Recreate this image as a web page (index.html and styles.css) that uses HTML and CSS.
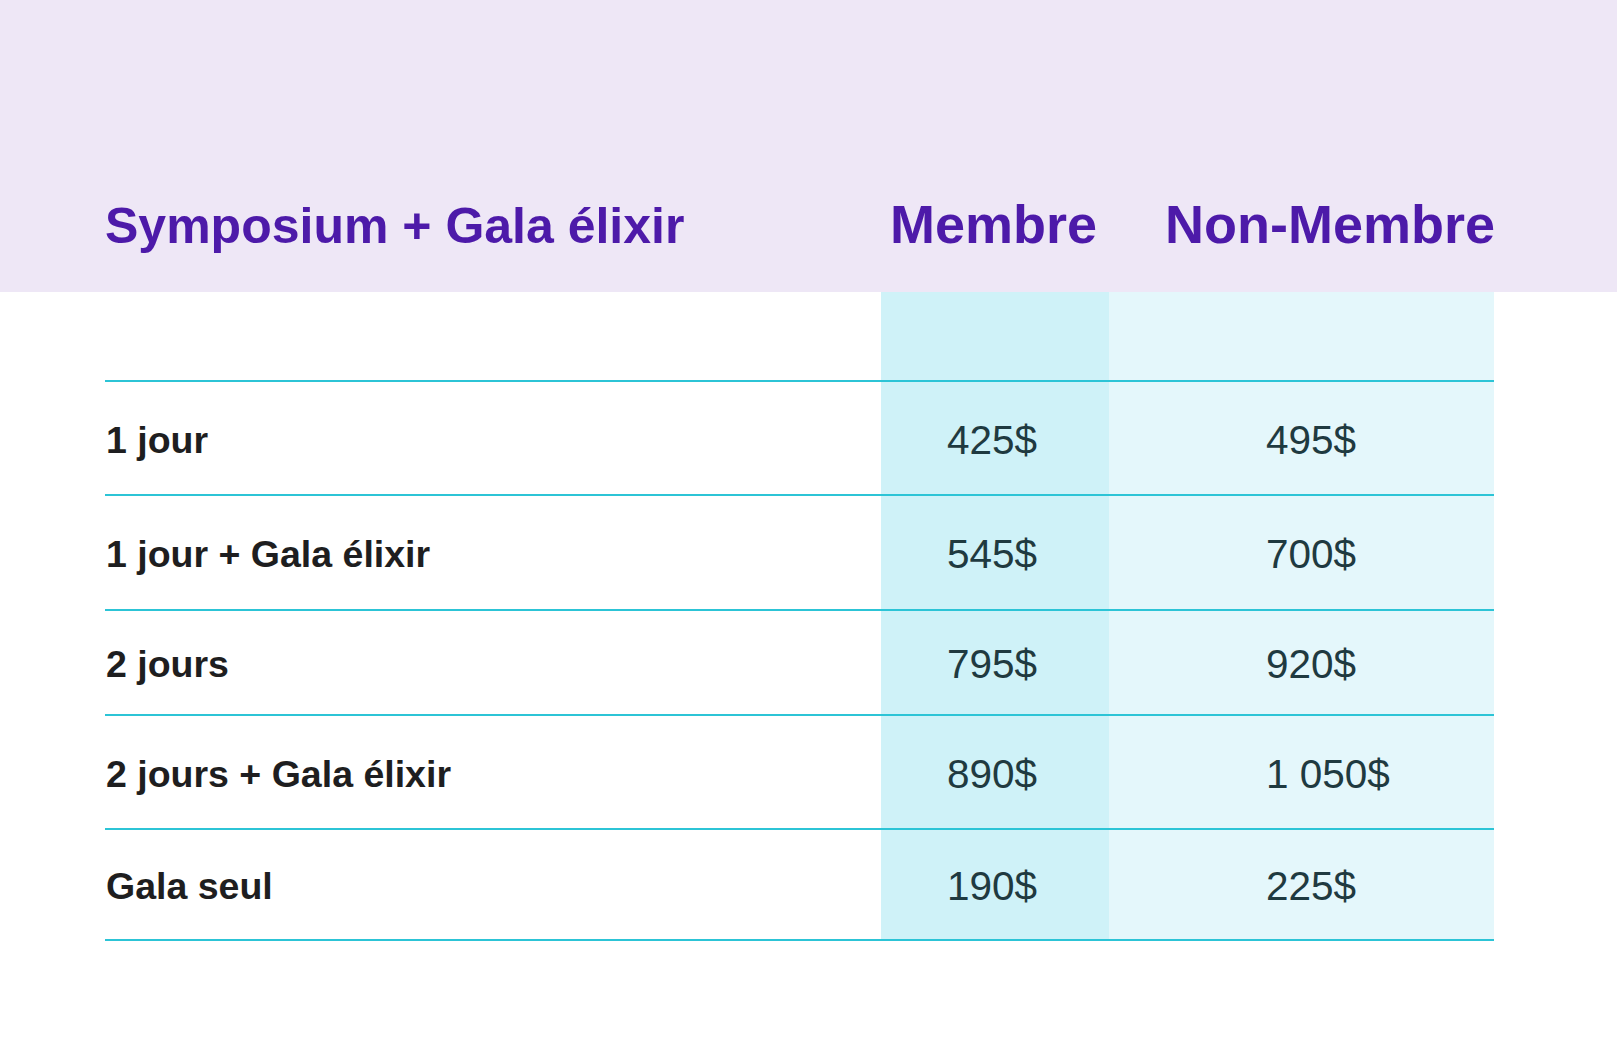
FILE: index.html
```html
<!DOCTYPE html>
<html lang="fr">
<head>
<meta charset="utf-8">
<title>Symposium + Gala élixir</title>
<link rel="stylesheet" href="styles.css">
</head>
<body>
<header class="band">
  <div class="grid head-row">
    <h1 class="title">Symposium + Gala élixir</h1>
    <div class="col-head col-member">Membre</div>
    <div class="col-head col-non">Non-Membre</div>
  </div>
</header>
<section class="grid table">
  <div class="cell label spacer"></div>
  <div class="cell member spacer"></div>
  <div class="cell non spacer"></div>

  <div class="cell label">1 jour</div>
  <div class="cell member price">425$</div>
  <div class="cell non price">495$</div>

  <div class="cell label">1 jour + Gala élixir</div>
  <div class="cell member price">545$</div>
  <div class="cell non price">700$</div>

  <div class="cell label">2 jours</div>
  <div class="cell member price">795$</div>
  <div class="cell non price">920$</div>

  <div class="cell label">2 jours + Gala élixir</div>
  <div class="cell member price">890$</div>
  <div class="cell non price">1 050$</div>

  <div class="cell label">Gala seul</div>
  <div class="cell member price">190$</div>
  <div class="cell non price">225$</div>
</section>
</body>
</html>
```
FILE: styles.css
```css
html, body {
  margin: 0;
  padding: 0;
  background: #ffffff;
  font-family: "Liberation Sans", Arial, sans-serif;
}

.grid {
  display: grid;
  grid-template-columns: 776px 228px 385px;
  margin-left: 105px;
  width: 1389px;
}

.band {
  background: #eee7f6;
  height: 292px;
  box-sizing: border-box;
  padding-top: 197px;
}

.head-row {
  align-items: baseline;
}

.title {
  margin: 0;
  font-size: 50px;
  line-height: 1;
  font-weight: 700;
  color: #4d1aa9;
  white-space: nowrap;
}

.col-head {
  font-size: 54px;
  line-height: 1;
  font-weight: 700;
  color: #4d1aa9;
  white-space: nowrap;
}

.col-member {
  padding-left: 9px;
}

.col-non {
  padding-left: 56px;
}

.table {
  grid-template-rows: 90px 114px 115px 105px 114px 111px;
}

.cell {
  box-sizing: border-box;
  border-bottom: 2px solid #2cc4d6;
  display: flex;
  align-items: center;
  white-space: nowrap;
  padding-top: 4px;
}

.spacer {
  padding-top: 0;
}

.member {
  background: #cff2f8;
  padding-left: 66px;
}

.non {
  background: #e4f7fb;
  padding-left: 157px;
}

.label {
  font-size: 37.5px;
  font-weight: 700;
  color: #1e1e20;
  padding-left: 1px;
}

.price {
  font-size: 40.5px;
  font-weight: 400;
  color: #1f3a40;
}
```
